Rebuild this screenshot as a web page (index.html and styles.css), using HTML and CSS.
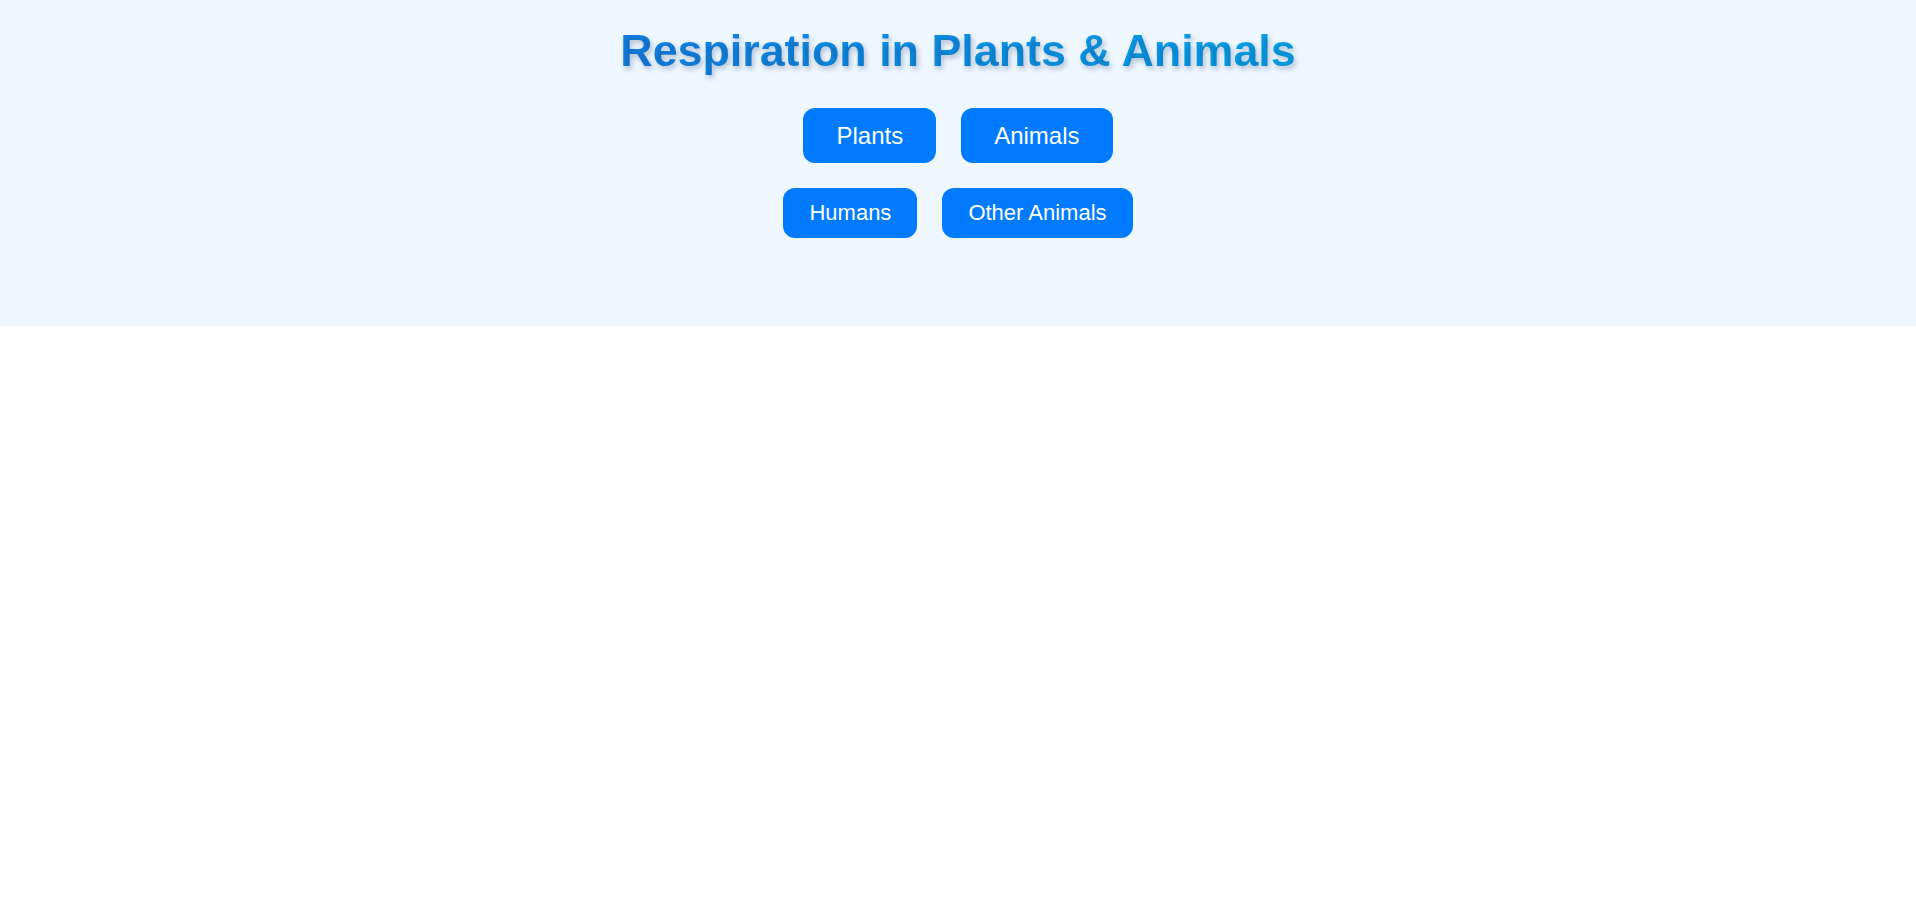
FILE: index.html
```html
<!DOCTYPE html>
<html lang="en">
<head>
<meta charset="utf-8">
<title>Respiration in Plants &amp; Animals</title>
<link rel="stylesheet" href="styles.css">
</head>
<body>
  <header class="hero">
    <h1 class="hero-title">Respiration in Plants &amp; Animals</h1>
    <nav class="tabs tabs-main">
      <button class="tab tab-lg">Plants</button>
      <button class="tab tab-lg">Animals</button>
    </nav>
    <nav class="tabs tabs-sub">
      <button class="tab tab-sm">Humans</button>
      <button class="tab tab-sm">Other Animals</button>
    </nav>
  </header>
  <main class="content"></main>
</body>
</html>
```

FILE: styles.css
```css
html, body {
  margin: 0;
  padding: 0;
  background: #ffffff;
  font-family: "Liberation Sans", Arial, sans-serif;
}

.hero {
  background: #eef6fe;
  padding: 24px 0 88px;
  display: flex;
  flex-direction: column;
  align-items: center;
}

.hero-title {
  margin: 0 0 32px;
  font-size: 44.8px;
  font-weight: bold;
  line-height: 52px;
  background: linear-gradient(90deg, #1582e6, #06a6ec);
  -webkit-background-clip: text;
  background-clip: text;
  -webkit-text-fill-color: transparent;
  text-shadow: 2px 3px 5px rgba(0, 40, 90, 0.25);
}

.tabs {
  display: flex;
  justify-content: center;
  gap: 25px;
}

.tabs-main {
  margin-bottom: 25px;
}

.tab {
  font-family: "Liberation Sans", Arial, sans-serif;
  background: #007bff;
  color: #ffffff;
  border: none;
  border-radius: 12px;
  cursor: pointer;
}

.tab-lg {
  font-size: 24px;
  line-height: 27px;
  padding: 14px 33px;
}

.tab-sm {
  font-size: 22px;
  line-height: 26px;
  padding: 12px 26px;
}

.content {
  min-height: 500px;
}
```
